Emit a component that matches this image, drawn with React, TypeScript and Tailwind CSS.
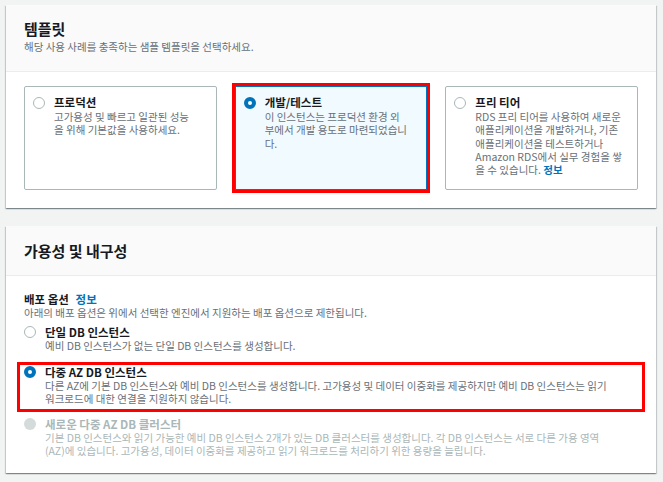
import React from 'react'

type RadioState = 'off' | 'on' | 'disabled'

function Radio({ state }: { state: RadioState }) {
  if (state === 'on') {
    return <span className="block w-[12px] h-[12px] shrink-0 rounded-full border-[4px] border-[#0073bb] bg-white" />
  }
  if (state === 'disabled') {
    return <span className="block w-[12px] h-[12px] shrink-0 rounded-full bg-[#d5dbdb]" />
  }
  return <span className="block w-[12px] h-[12px] shrink-0 rounded-full border-[1.5px] border-[#aab7b8] bg-white" />
}

function Tile({
  title,
  lines,
  selected = false,
  info = false,
}: {
  title: string
  lines: string[]
  selected?: boolean
  info?: boolean
}) {
  return (
    <div
      className={
        selected
          ? 'border border-[#0073bb] bg-[#f1faff] outline-3 outline-[#ff0000] pl-[8px] pt-[8px] flex gap-[9px]'
          : 'rounded-[2px] border border-[#aab7b8] bg-white pl-[8px] pt-[8px] flex gap-[9px]'
      }
    >
      <div className="pt-[2px]">
        <Radio state={selected ? 'on' : 'off'} />
      </div>
      <div>
        <div className="text-[11.5px] leading-[15px] font-bold text-[#16191f]">{title}</div>
        {lines.map((l, i) => (
          <div key={i} className="text-[10.5px] leading-[13.3px] text-[#687078] whitespace-nowrap">
            {l}
            {info && i === lines.length - 1 && (
              <span className="font-bold text-[#0073bb]"> 정보</span>
            )}
          </div>
        ))}
      </div>
    </div>
  )
}

function Option({
  title,
  lines,
  state,
}: {
  title: string
  lines: string[]
  state: RadioState
}) {
  const off = state === 'disabled'
  return (
    <div className="flex gap-[9px]">
      <div className="pt-[1px]">
        <Radio state={state} />
      </div>
      <div>
        <div className={'text-[11.5px] leading-[14px] font-bold ' + (off ? 'text-[#aab7b8]' : 'text-[#16191f]')}>
          {title}
        </div>
        {lines.map((l, i) => (
          <div
            key={i}
            className={'text-[10.5px] leading-[13.3px] whitespace-nowrap ' + (off ? 'text-[#aab7b8]' : 'text-[#687078]')}
          >
            {l}
          </div>
        ))}
      </div>
    </div>
  )
}

const panel =
  'bg-white shadow-[0_1px_1px_0_rgba(0,28,36,0.3),1px_1px_1px_0_rgba(0,28,36,0.15),-1px_1px_1px_0_rgba(0,28,36,0.15)]'

export default function App() {
  return (
    <div className="w-[663px] h-[482px] overflow-hidden bg-[#f2f3f3] pl-[6px] pr-[7px] pt-[5px] font-['Noto_Sans_CJK_KR','Noto_Sans',sans-serif]">
      <section className={panel}>
        <div className="bg-[#fafafa] border-b border-[#eaeded] px-[18px] pt-[13px] pb-[17px]">
          <h2 className="text-[15px] leading-[22px] font-bold text-[#16191f]">템플릿</h2>
          <p className="text-[10.5px] leading-[14px] text-[#687078]">해당 사용 사례를 충족하는 샘플 템플릿을 선택하세요.</p>
        </div>
        <div className="px-[18px] pt-[14px] pb-[18px] grid grid-cols-3 gap-[18px] h-[136px]">
          <Tile title="프로덕션" lines={['고가용성 및 빠르고 일관된 성능', '을 위해 기본값을 사용하세요.']} />
          <Tile
            selected
            title="개발/테스트"
            lines={['이 인스턴스는 프로덕션 환경 외', '부에서 개발 용도로 마련되었습니', '다.']}
          />
          <Tile
            info
            title="프리 티어"
            lines={[
              'RDS 프리 티어를 사용하여 새로운',
              '애플리케이션을 개발하거나, 기존',
              '애플리케이션을 테스트하거나',
              'Amazon RDS에서 실무 경험을 쌓',
              '을 수 있습니다.',
            ]}
          />
        </div>
      </section>

      <section className={panel + ' mt-[18px]'}>
        <div className="bg-[#fafafa] border-b border-[#eaeded] px-[18px] pt-[14px] pb-[13px]">
          <h2 className="text-[15px] leading-[22px] font-bold text-[#16191f]">가용성 및 내구성</h2>
        </div>
        <div className="px-[18px] pt-[16px] pb-[15px]">
          <div className="text-[11.5px] leading-[14px] font-bold text-[#16191f]">
            배포 옵션 <span className="ml-[4px] text-[#0073bb]">정보</span>
          </div>
          <p className="text-[10.5px] leading-[13.3px] text-[#687078]">
            아래의 배포 옵션은 위에서 선택한 엔진에서 지원하는 배포 옵션으로 제한됩니다.
          </p>
          <div className="mt-[6px]">
            <Option state="off" title="단일 DB 인스턴스" lines={['예비 DB 인스턴스가 없는 단일 DB 인스턴스를 생성합니다.']} />
          </div>
          <div className="mt-[9px] -mx-[7px] border-[3px] border-[#ff0000] pl-[4px] pb-[4px]">
            <Option
              state="on"
              title="다중 AZ DB 인스턴스"
              lines={[
                '다른 AZ에 기본 DB 인스턴스와 예비 DB 인스턴스를 생성합니다. 고가용성 및 데이터 이중화를 제공하지만 예비 DB 인스턴스는 읽기',
                '워크로드에 대한 연결을 지원하지 않습니다.',
              ]}
            />
          </div>
          <div className="mt-[5px]">
            <Option
              state="disabled"
              title="새로운 다중 AZ DB 클러스터"
              lines={[
                '기본 DB 인스턴스와 읽기 가능한 예비 DB 인스턴스 2개가 있는 DB 클러스터를 생성합니다. 각 DB 인스턴스는 서로 다른 가용 영역',
                '(AZ)에 있습니다. 고가용성, 데이터 이중화를 제공하고 읽기 워크로드를 처리하기 위한 용량을 늘립니다.',
              ]}
            />
          </div>
        </div>
      </section>
    </div>
  )
}
